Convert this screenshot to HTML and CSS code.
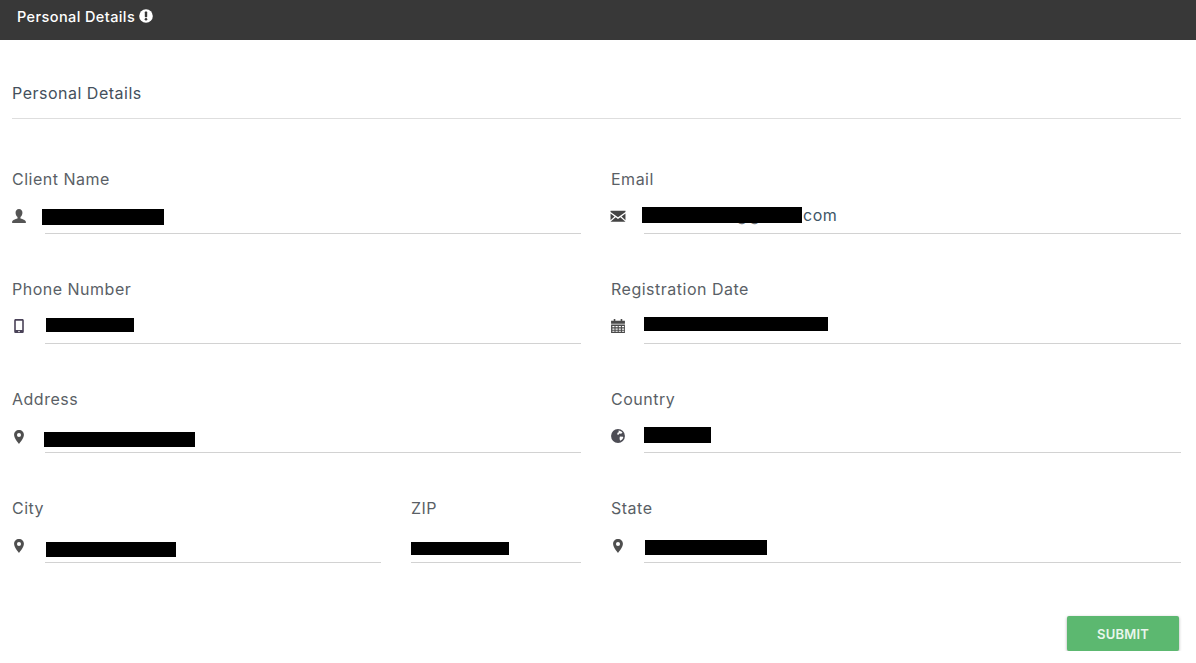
FILE: index.html
```html
<!DOCTYPE html>
<html lang="en">
<head>
<meta charset="utf-8">
<title>Personal Details</title>
<link rel="stylesheet" href="styles.css">
</head>
<body>
<header class="topbar">
  <span class="topbar-title">Personal Details</span>
  <svg class="topbar-icon" viewBox="0 0 14 14"><circle cx="7" cy="7" r="6.8" fill="#fff"/><rect x="5.8" y="2.6" width="2.4" height="5.6" rx=".6" fill="#383838"/><circle cx="7" cy="10.3" r="1.3" fill="#383838"/></svg>
</header>
<main class="page">
  <h2 class="section-title">Personal Details</h2>
  <form class="form-grid">
    <div class="field">
      <span class="label">Client Name</span>
      <div class="control">
        <svg class="icon" viewBox="0 0 14 14"><path fill="#555" d="M7 .8c2 0 3 1.500 3 3.400 0 1.500-.7 3-1.700 3.700v1.200c2 .7 4.700 1.400 4.700 3v1.100H1v-1.100c0-1.600 2.700-2.300 4.700-3V7.900C4.700 7.200 4 5.700 4 4.200 4 2.300 5 .8 7 .8z"/></svg>
        <div class="value"><span class="redact r-client"></span></div>
      </div>
    </div>
    <div class="field">
      <span class="label">Email</span>
      <div class="control">
        <svg class="icon" viewBox="-.5 -.5 15 15"><path fill="#444" d="M0 2h14v1.200L7 8.200 0 3.200zM0 4.700l3.800 2.700L0 11zM14 4.700v6.300l-3.800-3.600zM4.800 8.100 7 9.700l2.200-1.600 4.800 4.300H0z"/></svg>
        <div class="value"><span class="value-under">gg</span><span class="redact r-email"></span><span class="value-text">com</span></div>
      </div>
    </div>
    <div class="field">
      <span class="label">Phone Number</span>
      <div class="control">
        <svg class="icon" viewBox="0 0 14 14"><path fill="#4a4258" fill-rule="evenodd" d="M4.200 .8h5.600c1 0 1.400.5 1.400 1.400v9.600c0 .9-.4 1.400-1.400 1.400H4.200c-1 0-1.400-.5-1.400-1.400V2.200c0-.9.4-1.400 1.400-1.400zM4.200 2.300v8.300h5.600V2.300zM7 11.100a.7.7 0 1 0 0 1.400.7.7 0 0 0 0-1.400z"/></svg>
        <div class="value"><span class="redact r-phone"></span></div>
      </div>
    </div>
    <div class="field">
      <span class="label">Registration Date</span>
      <div class="control">
        <svg class="icon" viewBox="-.5 -.5 15 15"><path fill="#4a4a4a" fill-rule="evenodd" d="M3 .5h1.500V2h5V.5H11V2h2.500v3H.5V2H3zM.5 5.700h13v7.800H.5zM1.700 7v1.200h2V7zm3 0v1.200h2V7zm3 0v1.200h2V7zm3 0v1.200h2V7zM1.700 9.300v1.200h2V9.300zm3 0v1.200h2V9.300zm3 0v1.200h2V9.300zm3 0v1.200h2V9.300zM1.700 11.500v1h2v-1zm3 0v1h2v-1zm3 0v1h2v-1zm3 0v1h2v-1z"/></svg>
        <div class="value"><span class="redact r-date"></span></div>
      </div>
    </div>
    <div class="field field-tight">
      <span class="label">Address</span>
      <div class="control">
        <svg class="icon icon-pin" viewBox="-.5 -.5 15 15"><path fill="#4f4f4f" fill-rule="evenodd" d="M7 .5c2.700 0 4.600 2 4.600 4.500 0 3-3 6.600-4.600 8.500C5.400 11.600 2.400 8 2.400 5 2.400 2.500 4.300.5 7 .5zm0 2.700a1.900 1.900 0 1 0 0 3.800 1.900 1.900 0 0 0 0-3.800z"/></svg>
        <div class="value"><span class="redact r-address"></span></div>
      </div>
    </div>
    <div class="field field-tight">
      <span class="label">Country</span>
      <div class="control">
        <svg class="icon" viewBox="-.5 -.5 15 15"><circle cx="7" cy="7" r="6.500" fill="#4d4d55"/><path fill="#fff" d="M7.500 1.800c1.500.1 3 .9 3.700 2.100l-1.400 1-1.500-.3-.8 1.300-1.300-.4.300-1.500 1.200-.5zM8.800 7.500l2.900.2c.3.300.2 1-.1 1.500-.6 1.200-1.500 2-2.500 2.300-.5-1-.9-2.400-.3-4z"/></svg>
        <div class="value"><span class="redact r-country"></span></div>
      </div>
    </div>
    <div class="split">
      <div class="field">
        <span class="label">City</span>
        <div class="control">
          <svg class="icon icon-pin" viewBox="-.5 -.5 15 15"><path fill="#4f4f4f" fill-rule="evenodd" d="M7 .5c2.700 0 4.600 2 4.600 4.500 0 3-3 6.600-4.600 8.500C5.400 11.600 2.400 8 2.400 5 2.400 2.500 4.300.5 7 .5zm0 2.700a1.900 1.900 0 1 0 0 3.800 1.900 1.900 0 0 0 0-3.800z"/></svg>
          <div class="value"><span class="redact r-city"></span></div>
        </div>
      </div>
      <div class="field">
        <span class="label">ZIP</span>
        <div class="control">
          <div class="value"><span class="redact r-zip"></span></div>
        </div>
      </div>
    </div>
    <div class="field">
      <span class="label">State</span>
      <div class="control">
        <svg class="icon icon-pin" viewBox="-.5 -.5 15 15"><path fill="#4f4f4f" fill-rule="evenodd" d="M7 .5c2.700 0 4.600 2 4.600 4.500 0 3-3 6.600-4.600 8.500C5.400 11.600 2.400 8 2.400 5 2.400 2.500 4.300.5 7 .5zm0 2.700a1.900 1.900 0 1 0 0 3.800 1.900 1.900 0 0 0 0-3.800z"/></svg>
        <div class="value"><span class="redact r-state"></span></div>
      </div>
    </div>
  </form>
  <div class="actions"><button class="submit" type="button">SUBMIT</button></div>
</main>
</body>
</html>
```
FILE: styles.css
```css
* { box-sizing: border-box; }
html, body { margin: 0; padding: 0; background: #fff; }
body { font-family: Inter, "Open Sans", "Liberation Sans", sans-serif; color: #555; overflow: hidden; }

.topbar { height: 40px; background: #383838; color: #fff; display: flex; align-items: flex-start; gap: 4px; padding: 9px 0 0 17px; }
.topbar-title { font-size: 14.5px; line-height: 16px; font-weight: 500; letter-spacing: .4px; }
.topbar-icon { width: 14px; height: 14px; margin-top: 0; }

.page { padding: 44px 15px 0 12px; }
.section-title { margin: 0; height: 35px; font-size: 16px; line-height: 19px; font-weight: 400; letter-spacing: .5px; color: #44505c; border-bottom: 1px solid #dedede; }

.form-grid { display: grid; grid-template-columns: 569px 570px; column-gap: 30px; margin-top: 51px; }
.field { height: 110px; }
.field-tight { height: 109px; }
.label { display: block; height: 29px; font-size: 16px; line-height: 19px; letter-spacing: .5px; color: #5a5f66; }

.control { display: flex; align-items: flex-start; height: 45px; }
.icon { flex: none; width: 16px; height: 16px; margin: 9px 18px 0 -1px; }
.icon-pin { margin-top: 10px; }
.value { flex: 1; height: 35px; border-bottom: 1px solid #d2d2d2; position: relative; }
.field-tight .value { height: 34px; }
.value-text { position: absolute; left: 159px; top: 7px; font-size: 16px; line-height: 19px; letter-spacing: .5px; color: #3e5666; }
.value-under { position: absolute; left: 93px; top: 7px; font-size: 16px; line-height: 19px; letter-spacing: 3px; color: #6a6f74; }

.redact { position: absolute; background: #000; }
.r-client { left: -3px; top: 10px; width: 122px; height: 16px; }
.r-email { left: -2px; top: 8px; width: 160px; height: 16px; }
.r-phone { left: 1px; top: 9px; width: 88px; height: 14px; }
.r-date { left: 0; top: 8px; width: 184px; height: 14px; }
.r-address { left: -1px; top: 13px; width: 151px; height: 15px; }
.r-country { left: 0; top: 8px; width: 67px; height: 16px; }
.r-city { left: 1px; top: 14px; width: 130px; height: 15px; }
.r-zip { left: 0; top: 14px; width: 98px; height: 13px; }
.r-state { left: 1px; top: 12px; width: 122px; height: 15px; }

.split { display: grid; grid-template-columns: 369px 170px; column-gap: 30px; }

.actions { display: flex; justify-content: flex-end; margin-top: 7px; padding-right: 2px; }
.submit { width: 112px; height: 35px; border: 0; border-radius: 2px; background: #5cb870; color: #e9f6ec; font-family: inherit; font-size: 13px; font-weight: 600; letter-spacing: .2px; box-shadow: 0 1px 3px rgba(0,0,0,.35); }
```
